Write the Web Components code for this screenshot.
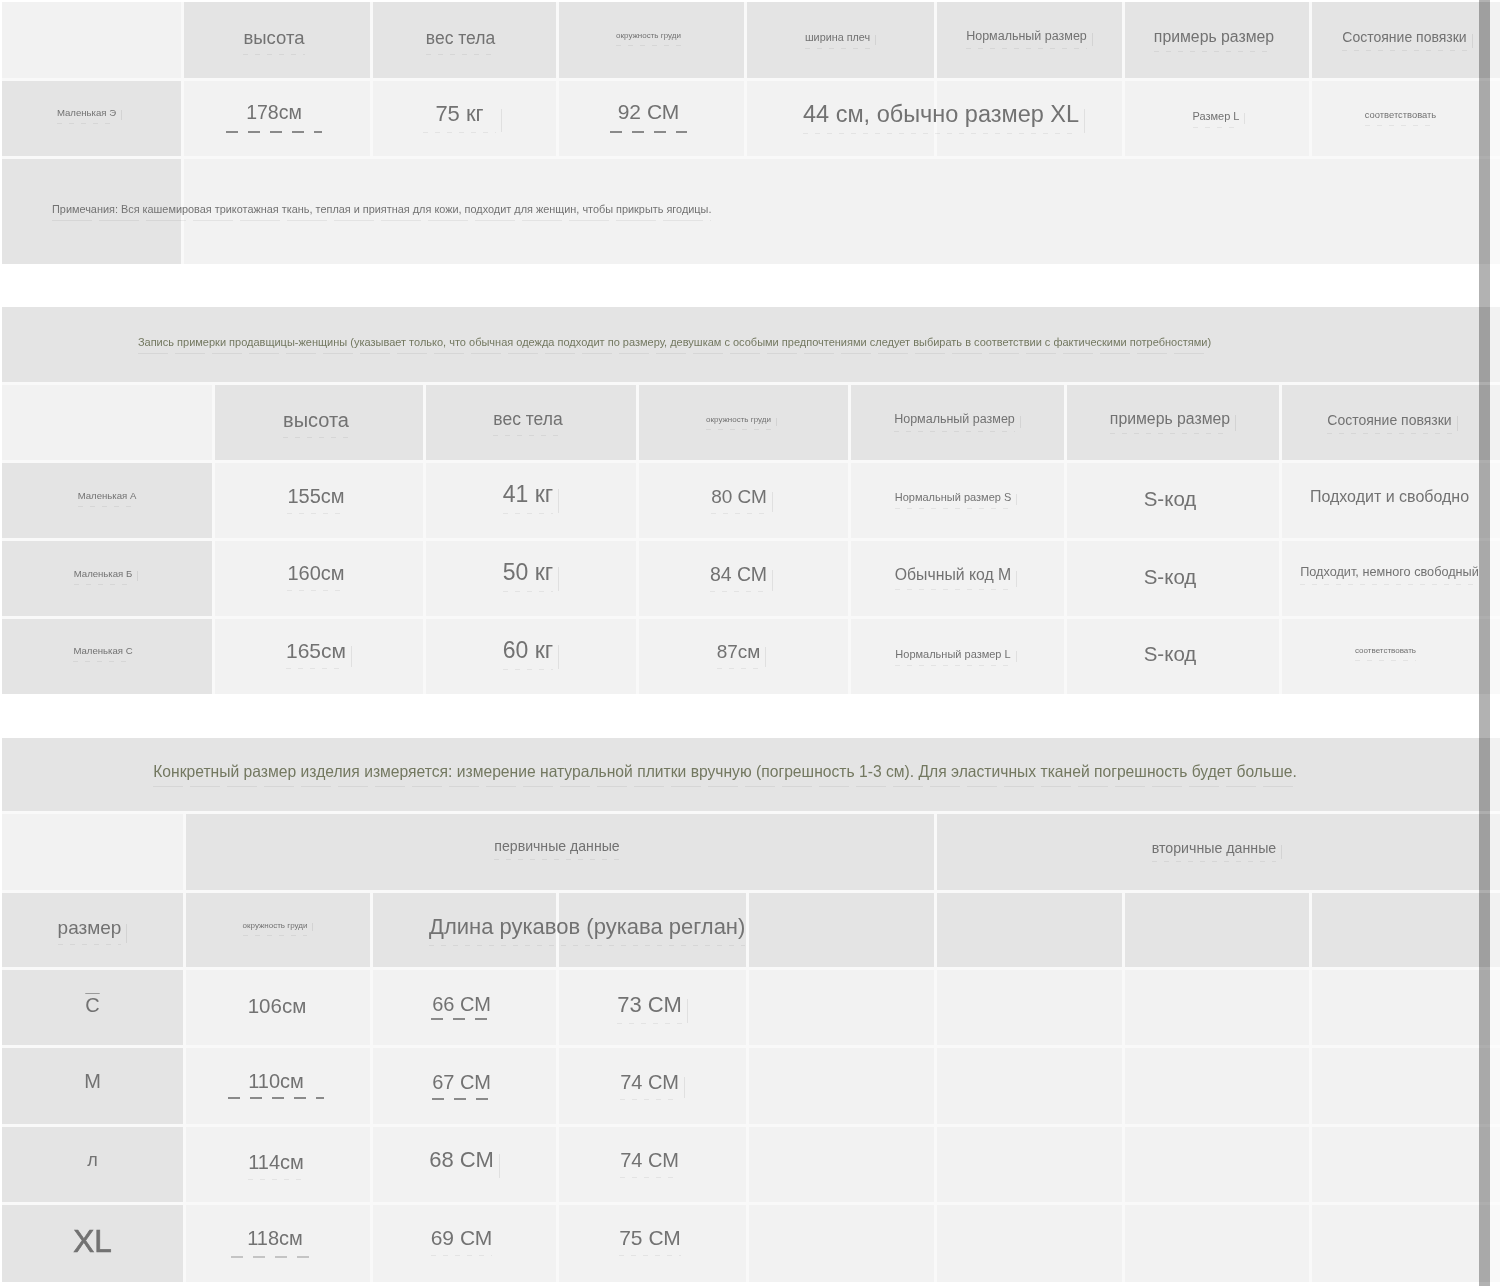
<!DOCTYPE html>
<html lang="ru">
<head>
<meta charset="utf-8">
<title>Таблица размеров</title>
<style>
html, body { margin: 0; background: #fff; }
body { font-family: "Liberation Sans", Arial, "Noto Sans", sans-serif; }
</style>
</head>
<body>
<size-page>
  <size-table style="--cols:179px 186px 183px 185px 187px 185px 184px 188px;--rows:76px 75px 105px">
    <size-cell tone="light"></size-cell>
    <size-cell mark="soft" style="--fs:18.5px;--pb:4px">высота</size-cell>
    <size-cell mark="soft" style="--fs:17.5px;--pb:4px;--pr:8px">вес тела</size-cell>
    <size-cell mark="soft" style="--fs:8px;--pb:10px">окружность груди</size-cell>
    <size-cell mark="soft" tick style="--fs:10.8px;--pb:6px">ширина плеч</size-cell>
    <size-cell mark="soft" tick style="--fs:12.5px;--pb:8px">Нормальный размер</size-cell>
    <size-cell mark="soft" style="--fs:15.8px;--pb:6px">примерь размер</size-cell>
    <size-cell mark="soft" tick style="--fs:14px;--pb:6px;--pr:3px">Состояние повязки</size-cell>

    <size-cell style="--fs:9.6px;--pb:12px;--pr:10px" mark="soft" tick>Маленькая Э</size-cell>
    <size-cell tone="light" mark="dash" style="--fs:19.5px;--ml:-20px;--mo:7px;--pb:13px">178см</size-cell>
    <size-cell tone="light" mark="soft" tick style="--fs:22px;--pb:9px;--pr:10px;--ml:-12px">75 кг</size-cell>
    <size-cell tone="light" mark="dash" style="--fs:21px;--ml:-8px;--mo:7px;--pb:13px">92 СМ</size-cell>
    <size-cell tone="light" top align="start" tick mark="soft" style="--fs:23.5px;--pl:56px;--pb:9px">44 см, обычно размер XL</size-cell>
    <size-cell tone="light"></size-cell>
    <size-cell tone="light" mark="soft" tick style="--fs:11px;--pb:6px;--pr:2px">Размер L</size-cell>
    <size-cell tone="light" mark="soft" style="--fs:9.4px;--pb:8px;--pr:11px">соответствовать</size-cell>

    <size-cell top align="start" mark="soft" style="--fs:10.9px;--pl:50px;--pb:6px;--d:40px">Примечания: Вся кашемировая трикотажная ткань, теплая и приятная для кожи, подходит для женщин, чтобы прикрыть ягодицы.</size-cell>
    <size-cell tone="light" style="grid-column:span 7"></size-cell>
  </size-table>

  <size-table style="--cols:210px 208px 210px 209px 213px 212px 218px;--rows:75px 75px 75px 75px 75px;margin-top:43px">
    <size-cell caption mark="soft" style="grid-column:span 7;--fs:11px;--pb:6px;--pr:153px;--d:30px">Запись примерки продавщицы-женщины (указывает только, что обычная одежда подходит по размеру, девушкам с особыми предпочтениями следует выбирать в соответствии с фактическими потребностями)</size-cell>
    <size-cell tone="light"></size-cell>
    <size-cell mark="soft" style="--fs:20px;--pb:4px">высота</size-cell>
    <size-cell mark="soft" style="--fs:17.5px;--pb:6px">вес тела</size-cell>
    <size-cell mark="soft" tick style="--fs:8px;--pb:6px;--pr:10px">окружность груди</size-cell>
    <size-cell mark="soft" tick style="--fs:12.5px;--pb:8px">Нормальный размер</size-cell>
    <size-cell mark="soft" tick style="--fs:15.8px;--pb:8px">примерь размер</size-cell>
    <size-cell mark="soft" tick style="--fs:14px;--pb:6px;--pr:3px">Состояние повязки</size-cell>

    <size-cell mark="soft" style="--fs:9.6px;--pb:10px;--pr:0px">Маленькая А</size-cell>
    <size-cell tone="light" mark="soft" style="--fs:20px;--pb:8px">155см</size-cell>
    <size-cell tone="light" mark="soft" tick style="--fs:23px;--pb:12px">41 кг</size-cell>
    <size-cell tone="light" mark="soft" tick style="--fs:19px;--pb:8px;--pr:9px">80 СМ</size-cell>
    <size-cell tone="light" mark="soft" tick style="--fs:11px;--pb:8px;--pr:9px">Нормальный размер S</size-cell>
    <size-cell tone="light" style="--fs:20.5px;--pb:4px">S-код</size-cell>
    <size-cell tone="light" style="--fs:16px;--pb:8px;--pr:3px">Подходит и свободно</size-cell>

    <size-cell mark="soft" tick style="--fs:9.6px;--pb:10px;--pr:8px">Маленькая Б</size-cell>
    <size-cell tone="light" mark="soft" style="--fs:20px;--pb:10px">160см</size-cell>
    <size-cell tone="light" mark="soft" tick style="--fs:23px;--pb:12px">50 кг</size-cell>
    <size-cell tone="light" mark="soft" tick style="--fs:19.5px;--pb:8px;--pr:10px">84 СМ</size-cell>
    <size-cell tone="light" mark="soft" tick style="--fs:15.8px;--pb:8px;--pr:9px">Обычный код М</size-cell>
    <size-cell tone="light" style="--fs:20.5px;--pb:4px">S-код</size-cell>
    <size-cell tone="light" mark="soft" style="--fs:12.7px;--pb:14px;--pr:3px">Подходит, немного свободный</size-cell>

    <size-cell mark="soft" style="--fs:9.6px;--pb:12px;--pr:8px">Маленькая С</size-cell>
    <size-cell tone="light" mark="soft" tick style="--fs:21px;--pb:12px">165см</size-cell>
    <size-cell tone="light" mark="soft" tick style="--fs:23px;--pb:12px">60 кг</size-cell>
    <size-cell tone="light" mark="soft" tick style="--fs:19px;--pb:10px;--pr:10px">87см</size-cell>
    <size-cell tone="light" mark="soft" tick style="--fs:11px;--pb:6px;--pr:9px">Нормальный размер L</size-cell>
    <size-cell tone="light" style="--fs:20.5px;--pb:6px">S-код</size-cell>
    <size-cell tone="light" mark="soft" style="--fs:8px;--pb:12px;--pr:11px">соответствовать</size-cell>
  </size-table>

  <size-table style="--cols:181px 184px 183px 187px 185px 185px 184px 188px;--rows:73px 76px 74px 75px 76px 75px 77px;margin-top:44px">
    <size-cell caption mark="soft" style="grid-column:span 8;--fs:15.67px;--pb:6px;--pr:52px;--d:30px">Конкретный размер изделия измеряется: измерение натуральной плитки вручную (погрешность 1-3 см). Для эластичных тканей погрешность будет больше.</size-cell>
    <size-cell tone="light"></size-cell>
    <size-cell mark="soft" style="grid-column:span 4;--fs:14.1px;--pb:12px">первичные данные</size-cell>
    <size-cell mark="soft" tick style="grid-column:span 3;--fs:14.2px;--pb:8px;--pr:9px">вторичные данные</size-cell>

    <size-cell mark="soft" tick style="--fs:19px;--pb:4px">размер</size-cell>
    <size-cell mark="soft" tick style="--fs:8px;--pb:10px">окружность груди</size-cell>
    <size-cell top align="start" mark="soft" style="--fs:22px;--pl:56px;--pb:6px">Длина рукавов (рукава реглан)</size-cell>
    <size-cell></size-cell><size-cell></size-cell><size-cell></size-cell><size-cell></size-cell><size-cell></size-cell>

    <size-cell over style="--fs:20px;--pb:4px;--pr:0px">С</size-cell>
    <size-cell tone="light" style="--fs:20.5px;--pb:4px;--pr:2px">106см</size-cell>
    <size-cell tone="light" mark="dash" style="--fs:20px;--ml:-1px;--mo:2px;--pb:6px">66 СМ</size-cell>
    <size-cell tone="light" tick mark="soft" style="--fs:22px;--pb:6px">73 СМ</size-cell>
    <size-cell tone="light"></size-cell><size-cell tone="light"></size-cell><size-cell tone="light"></size-cell><size-cell tone="light"></size-cell>

    <size-cell style="--fs:20px;--pb:10px;--pr:0px">М</size-cell>
    <size-cell tone="light" mark="dash" style="--fs:20px;--ml:-20px;--mo:4px;--pb:10px;--pr:4px">110см</size-cell>
    <size-cell tone="light" mark="dash" style="--fs:20px;--mo:4px;--pb:8px">67 СМ</size-cell>
    <size-cell tone="light" mark="soft" tick style="--fs:20px;--pb:8px">74 СМ</size-cell>
    <size-cell tone="light"></size-cell><size-cell tone="light"></size-cell><size-cell tone="light"></size-cell><size-cell tone="light"></size-cell>

    <size-cell style="--fs:18px;--pb:8px;--pr:0px">л</size-cell>
    <size-cell tone="light" mark="soft" style="--fs:20px;--pb:4px;--pr:4px">114см</size-cell>
    <size-cell tone="light" tick style="--fs:22px;--pb:10px">68 СМ</size-cell>
    <size-cell tone="light" mark="soft" style="--fs:20px;--pb:8px">74 СМ</size-cell>
    <size-cell tone="light"></size-cell><size-cell tone="light"></size-cell><size-cell tone="light"></size-cell><size-cell tone="light"></size-cell>

    <size-cell heavy style="--fs:31.5px;--pb:5px;--pr:0px">XL</size-cell>
    <size-cell tone="light" mark="dash" style="--fs:20px;--ml:-16px;--mo:6px;--pb:10px;--mc:#c4c4c4">118см</size-cell>
    <size-cell tone="light" mark="soft" style="--fs:21px;--pb:12px">69 СМ</size-cell>
    <size-cell tone="light" mark="soft" style="--fs:21px;--pb:12px;--pr:5px">75 СМ</size-cell>
    <size-cell tone="light"></size-cell><size-cell tone="light"></size-cell><size-cell tone="light"></size-cell><size-cell tone="light"></size-cell>
  </size-table>
  <scroll-strip></scroll-strip>
</size-page>

<script>
class SizePage extends HTMLElement {
    constructor() {
        super();
        this.attachShadow({ mode: 'open' }).innerHTML = `
            <style>
            :host {
                display: block;
                position: relative;
                box-sizing: border-box;
                width: 1500px;
                height: 1286px;
                overflow: hidden;
                padding: 2px 0 0 2px;
                font-family: "Liberation Sans", Arial, sans-serif;
            }
            </style>
            <slot></slot>
        `;
    }
}

class SizeTable extends HTMLElement {
    constructor() {
        super();
        this.attachShadow({ mode: 'open' }).innerHTML = `
            <style>
            :host {
                display: grid;
                gap: 3px;
                grid-template-columns: var(--cols);
                grid-template-rows: var(--rows);
                background: #f9f9f9;
            }
            </style>
            <slot></slot>
        `;
    }
}

class SizeCell extends HTMLElement {
    constructor() {
        super();
        this.attachShadow({ mode: 'open' }).innerHTML = `
            <style>
            :host {
                display: flex;
                align-items: center;
                justify-content: center;
                box-sizing: border-box;
                min-width: 0;
                padding: var(--pt, 0) var(--pr, 6px) var(--pb, 0) var(--pl, 0);
                background: #e4e4e4;
                color: #727272;
                font-size: var(--fs, 16px);
                white-space: nowrap;
            }
            :host([tone="light"]) { background: #f2f2f2; }
            :host([align="start"]) { justify-content: flex-start; }
            :host([caption]) { color: #737860; }
            :host([heavy]) { -webkit-text-stroke: 0.7px #727272; }
            :host([over]) .t { text-decoration: overline 1px #9a9a9a; }
            /* long labels run over the next cells in the source picture */
            :host([top]) { position: relative; z-index: 1; }
            .t { position: relative; filter: blur(0.4px); }
            :host(:empty) .t { display: none; }
            :host([mark]) .t::after {
                content: "";
                position: absolute;
                left: var(--ml, 0);
                right: var(--ml, 0);
                top: calc(100% + var(--mo, 5px));
                height: 1px;
            }
            :host([mark="soft"]) .t::after {
                background: repeating-linear-gradient(90deg, rgba(0, 0, 0, 0.06) 0 var(--d, 5px), transparent var(--d, 5px) calc(var(--d, 5px) + 7px));
            }
            :host([mark="dash"]) .t::after {
                height: 2px;
                background: repeating-linear-gradient(90deg, var(--mc, #8a8a8a) 0 12px, transparent 12px 22px);
            }
            :host([tick]) .t::before {
                content: "";
                position: absolute;
                right: calc(var(--ml, 0px) - 6px);
                top: 30%;
                height: 90%;
                width: 1px;
                background: rgba(0, 0, 0, 0.07);
            }
            </style>
            <span class="t"><slot></slot></span>
        `;
    }
}

class ScrollStrip extends HTMLElement {
    constructor() {
        super();
        this.attachShadow({ mode: 'open' }).innerHTML = `
            <style>
            :host {
                display: block;
                position: absolute;
                top: 0;
                bottom: 0;
                left: 1479px;
                width: 11px;
                z-index: 2;
                background: rgba(0, 0, 0, 0.3);
            }
            /* pale band to the right of the strip */
            :host::after {
                content: "";
                position: absolute;
                top: 0;
                bottom: 0;
                left: 11px;
                width: 10px;
                background: rgba(255, 255, 255, 0.5);
            }
            </style>
        `;
    }
}

customElements.define('size-page', SizePage);
customElements.define('size-table', SizeTable);
customElements.define('size-cell', SizeCell);
customElements.define('scroll-strip', ScrollStrip);
</script>
</body>
</html>
